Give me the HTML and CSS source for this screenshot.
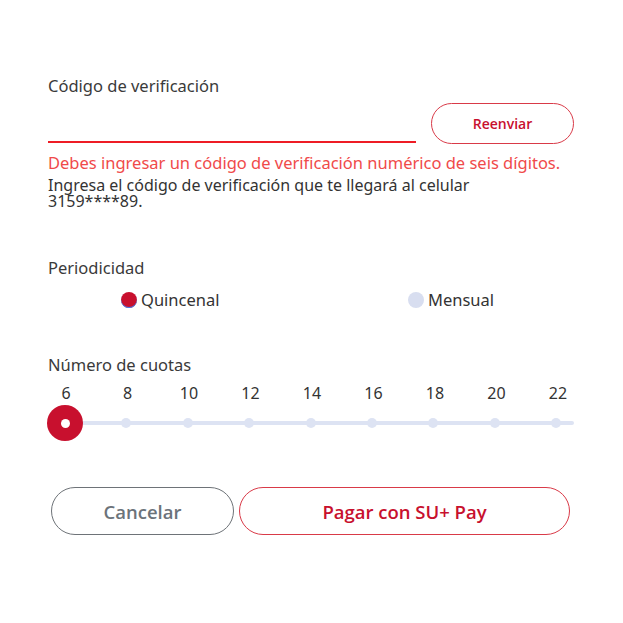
FILE: index.html
```html
<!DOCTYPE html>
<html lang="es">
<head>
<meta charset="utf-8">
<link rel="stylesheet" href="styles.css">
</head>
<body>
<main class="form">
  <section class="field">
    <label class="label">Código de verificación</label>
    <div class="code-row">
      <div class="code-input"></div>
      <button class="btn-resend">Reenviar</button>
    </div>
    <p class="error">Debes ingresar un código de verificación numérico de seis dígitos.</p>
    <p class="help">Ingresa el código de verificación que te llegará al celular<br>3159****89.</p>
  </section>

  <section class="field period">
    <div class="label">Periodicidad</div>
    <div class="radios">
      <div class="radio radio-a"><span class="dot on"></span>Quincenal</div>
      <div class="radio radio-b"><span class="dot"></span>Mensual</div>
    </div>
  </section>

  <section class="field cuotas">
    <div class="label">Número de cuotas</div>
    <div class="ticks">
      <span>6</span><span>8</span><span>10</span><span>12</span><span>14</span><span>16</span><span>18</span><span>20</span><span>22</span>
    </div>
    <div class="slider">
      <div class="track"></div>
      <div class="stops">
        <span class="stop"></span><span class="stop"></span><span class="stop"></span><span class="stop"></span><span class="stop"></span><span class="stop"></span><span class="stop"></span><span class="stop"></span><span class="stop"></span>
      </div>
      <div class="thumb"><span></span></div>
    </div>
  </section>

  <div class="actions">
    <button class="btn btn-cancel">Cancelar</button>
    <button class="btn btn-pay">Pagar con SU+ Pay</button>
  </div>
</main>
</body>
</html>
```

FILE: styles.css
```css
* { box-sizing: border-box; }
html, body { margin: 0; background: #fff; }
body {
  font-family: "Noto Sans", "Open Sans", sans-serif;
  color: #333;
}
.form {
  padding: 76px 49px 0 48px;
  display: flex;
  flex-direction: column;
}
.label {
  font-size: 16.5px;
  line-height: 20px;
  color: #3a3a3a;
  display: block;
}
.code-row {
  display: flex;
  align-items: flex-end;
  gap: 15px;
  margin-top: 6px;
}
.code-input {
  flex: 0 0 368px;
  height: 41px;
  border-bottom: 2px solid #ee1c25;
  margin-bottom: 1px;
}
.btn-resend {
  width: 143px;
  height: 41px;
  border: 1px solid #d93a48;
  border-radius: 21px;
  background: #fff;
  color: #c8102e;
  font-family: "Open Sans", sans-serif;
  font-weight: 600;
  font-size: 14px;
}
.error {
  margin: 9px 0 0;
  font-size: 16.5px;
  line-height: 20px;
  color: #f04a4a;
}
.help {
  margin: 4px 0 0;
  font-size: 16px;
  line-height: 16px;
  color: #333;
}
.period { margin-top: 49px; }
.radios {
  display: flex;
  margin-top: 12px;
  font-size: 16.5px;
  line-height: 20px;
  color: #333;
}
.radio { display: flex; align-items: center; gap: 4px; }
.radio-a { margin-left: 73px; width: 287px; }
.dot {
  width: 16px; height: 16px; border-radius: 50%;
  background: #d8def0;
}
.dot.on {
  background: #c8102e;
  box-shadow: 0 -1px 0 #3b82f6 inset;
}
.cuotas { margin-top: 45px; }
.ticks {
  display: flex;
  justify-content: space-between;
  margin-top: 8px;
  padding: 0 10px 0 12px;
  font-size: 16px;
  line-height: 20px;
  color: #333;
}
.ticks span { width: 12px; text-align: center; display: flex; justify-content: center; }
.slider {
  position: relative;
  height: 40px;
  margin-top: 0;
}
.track {
  position: absolute;
  left: 17px; right: 0;
  top: 18px;
  height: 4px;
  background: #dde3f3;
  border-radius: 2px;
}
.stops {
  position: absolute;
  left: 12px; right: 13px;
  top: 15px;
  display: flex;
  justify-content: space-between;
}
.stop {
  width: 10px; height: 10px; border-radius: 50%;
  background: #dde3f3;
}
.thumb {
  position: absolute;
  left: -1px; top: 2px;
  width: 36px; height: 36px; border-radius: 50%;
  background: #c8102e;
  display: flex; align-items: center; justify-content: center;
}
.thumb span {
  width: 9px; height: 9px; border-radius: 50%; background: #fff;
}
.actions {
  display: flex;
  gap: 5px;
  margin-top: 44px;
  padding: 0 4px 0 3px;
}
.btn {
  height: 48px;
  border-radius: 24px;
  background: #fff;
  font-family: "Open Sans", sans-serif;
  font-weight: 600;
  font-size: 18.5px;
}
.btn-cancel {
  width: 183px;
  border: 1px solid #6e7378;
  color: #6c737a;
}
.btn-pay {
  flex: 1;
  border: 1px solid #d93a48;
  color: #c8102e;
}
```
